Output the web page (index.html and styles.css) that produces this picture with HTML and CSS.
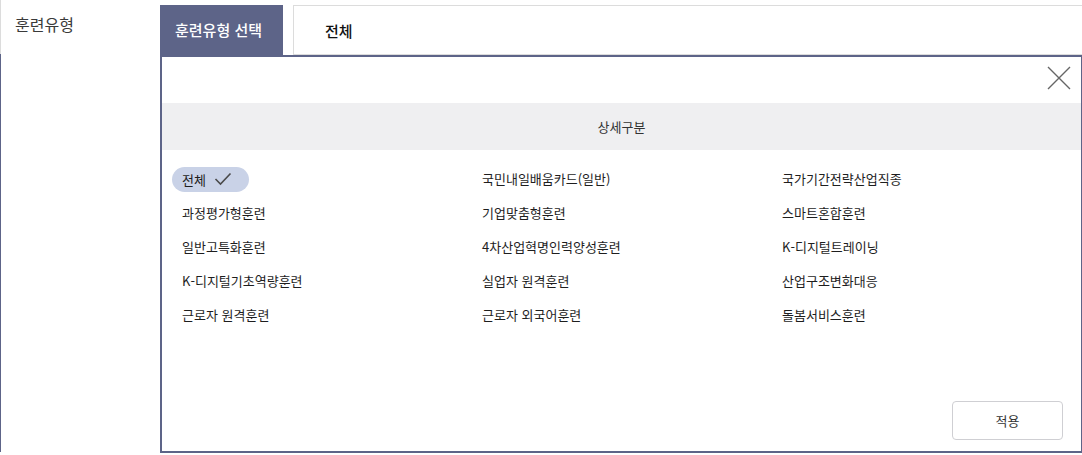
FILE: index.html
```html
<!DOCTYPE html>
<html lang="ko">
<head>
<meta charset="utf-8">
<title>훈련유형</title>
<link rel="stylesheet" href="styles.css">
</head>
<body>
<div class="field">
  <div class="label-col">
    <div class="label-top">훈련유형</div>
    <div class="label-rest"></div>
  </div>
  <div class="content">
    <div class="tabs">
      <div class="tab-active">훈련유형 선택</div>
      <div class="tab-value">전체</div>
    </div>
    <div class="popup">
      <div class="popup-head">
        <button class="close" aria-label="닫기">
          <svg width="24" height="24" viewBox="0 0 24 24"><path d="M1 1L23 23M23 1L1 23" stroke="#666" stroke-width="1.4" fill="none"/></svg>
        </button>
      </div>
      <div class="band">상세구분</div>
      <ul class="grid">
        <li class="item selected">전체 <svg class="check" width="18" height="14" viewBox="0 0 18 14"><path d="M1.5 7L6.5 12L16.5 1.5" stroke="#4a4a4a" stroke-width="1.6" fill="none"/></svg></li>
        <li class="item">국민내일배움카드(일반)</li>
        <li class="item">국가기간전략산업직종</li>
        <li class="item">과정평가형훈련</li>
        <li class="item">기업맞춤형훈련</li>
        <li class="item">스마트혼합훈련</li>
        <li class="item">일반고특화훈련</li>
        <li class="item">4차산업혁명인력양성훈련</li>
        <li class="item">K-디지털트레이닝</li>
        <li class="item">K-디지털기초역량훈련</li>
        <li class="item">실업자 원격훈련</li>
        <li class="item">산업구조변화대응</li>
        <li class="item">근로자 원격훈련</li>
        <li class="item">근로자 외국어훈련</li>
        <li class="item">돌봄서비스훈련</li>
      </ul>
      <div class="footer">
        <button class="apply">적용</button>
      </div>
    </div>
  </div>
</div>
</body>
</html>
```

FILE: styles.css
```css
* { box-sizing: border-box; }
html, body { margin: 0; padding: 0; background: #fff; overflow: hidden; }
body {
  font-family: "Noto Sans CJK KR", "Noto Sans", sans-serif;
  color: #222;
  width: 1082px;
  height: 455px;
}
.field {
  display: flex;
  height: 453px;
}
.label-col {
  width: 160px;
  display: flex;
  flex-direction: column;
}
.label-top {
  height: 54px;
  border-left: 1px solid #dcdcdc;
  padding: 11px 0 0 14px;
  font-size: 16px;
  line-height: 26px;
  color: #3a3a3a;
}
.label-rest {
  flex: 1;
  border-left: 1px solid #5d6488;
  margin-bottom: 1px;
}
.content {
  flex: 1;
  display: flex;
  flex-direction: column;
  margin-right: -1px;
}
.tabs {
  display: flex;
  height: 55px;
  padding-top: 5px;
}
.tab-active {
  width: 123px;
  background: #5d6488;
  color: #fff;
  font-size: 15px;
  font-weight: 500;
  line-height: 50px;
  padding-left: 15px;
}
.tab-value {
  flex: 1;
  margin-left: 10px;
  border: 1px solid #dcdcdc;
  border-right: none;
  font-size: 15px;
  font-weight: 500;
  color: #111;
  line-height: 50px;
  padding-left: 31px;
  height: 50px;
}
.popup {
  height: 398px;
  border: 2px solid #5d6488;
  display: flex;
  flex-direction: column;
}
.popup-head {
  height: 46px;
  display: flex;
  justify-content: flex-end;
  padding: 9px 10px 0 0;
}
.close {
  width: 24px;
  height: 24px;
  padding: 0;
  border: none;
  background: none;
  display: block;
}
.close svg { display: block; }
.band {
  height: 47px;
  background: #efeff1;
  text-align: center;
  font-size: 13px;
  line-height: 47px;
  color: #333;
}
.grid {
  list-style: none;
  margin: 0;
  padding: 17px 0 0 10px;
  display: grid;
  grid-template-columns: 300px 300px 300px;
  row-gap: 9px;
}
.item {
  height: 25px;
  line-height: 24px;
  font-size: 13px;
  padding-left: 10px;
  color: #1e1e1e;
  white-space: nowrap;
}
.item.selected {
  justify-self: start;
  display: flex;
  align-items: center;
  gap: 8px;
  background: #c9d2e7;
  border-radius: 13px;
  padding-right: 16px;
  width: 77px;
}
.check { display: block; margin-top: -1px; }
.footer {
  margin-top: auto;
  display: flex;
  justify-content: flex-end;
  padding: 0 18px 11px 0;
}
.apply {
  width: 111px;
  height: 39px;
  border: 1px solid #cfcfd3;
  border-radius: 4px;
  background: #fff;
  font-family: inherit;
  font-size: 13px;
  color: #333;
  padding: 0;
}
```
